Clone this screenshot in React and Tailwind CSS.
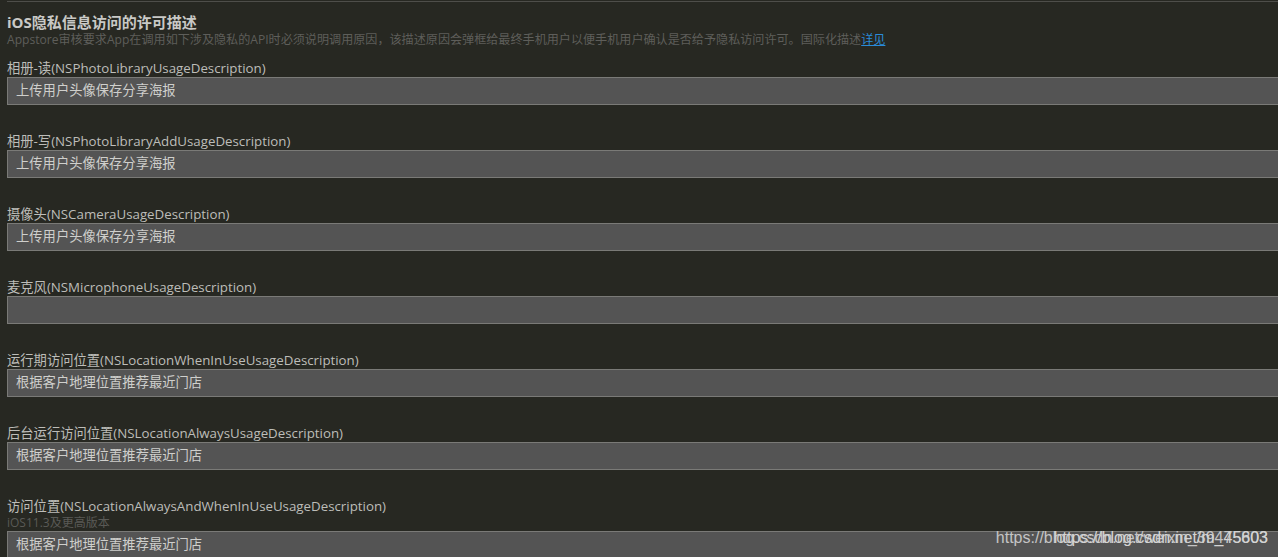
import React from "react";

const fields = [
  { label: "相册-读(NSPhotoLibraryUsageDescription)", value: "上传用户头像保存分享海报" },
  { label: "相册-写(NSPhotoLibraryAddUsageDescription)", value: "上传用户头像保存分享海报" },
  { label: "摄像头(NSCameraUsageDescription)", value: "上传用户头像保存分享海报" },
  { label: "麦克风(NSMicrophoneUsageDescription)", value: "" },
  { label: "运行期访问位置(NSLocationWhenInUseUsageDescription)", value: "根据客户地理位置推荐最近门店" },
  { label: "后台运行访问位置(NSLocationAlwaysUsageDescription)", value: "根据客户地理位置推荐最近门店" },
  { label: "访问位置(NSLocationAlwaysAndWhenInUseUsageDescription)", value: "根据客户地理位置推荐最近门店", hint: "iOS11.3及更高版本" },
];

const font = { fontFamily: '"Open Sans", "Noto Sans CJK SC", sans-serif' };

export default function App() {
  return (
    <div className="relative w-[1278px] h-[557px] overflow-hidden bg-[#272822]" style={font}>
      <div className="pl-[7px]">
        <div className="mt-[1px] border-t border-[#4e4e4a]" />
        <div className="mt-[10px] text-[15px] leading-[20px] font-bold text-[#c9c9c6]">iOS隐私信息访问的许可描述</div>
        <div className="text-[12.1px] leading-[16px] text-[#5e5e5a] whitespace-nowrap">
          Appstore审核要求App在调用如下涉及隐私的API时必须说明调用原因，该描述原因会弹框给最终手机用户以便手机用户确认是否给予隐私访问许可。国际化描述
          <span className="text-[#2a8bd9] underline">详见</span>
        </div>
        <div className="mt-[11px] flex flex-col gap-[27px]">
          {fields.map((f, i) => (
            <div key={i} className="flex flex-col">
              <div className="text-[13.3px] leading-[18px] text-[#bdbdb9] whitespace-nowrap">{f.label}</div>
              {f.hint && (
                <div className="text-[12px] leading-[16px] text-[#5a5a56] whitespace-nowrap">{f.hint}</div>
              )}
              <div className="h-[28px] border border-r-0 border-[#7a7a77] bg-[#545454] pl-[8px] flex items-center text-[13.3px] text-[#cfcfcc] whitespace-nowrap">
                {f.value}
              </div>
            </div>
          ))}
        </div>
      </div>
      <div
        className="absolute right-[10px] top-[528px] text-[16px] leading-[20px] text-[#c4c4c4] whitespace-nowrap"
        style={{ fontFamily: '"Liberation Sans", Arial, sans-serif' }}
      >
        https://blog.csdn.net/weixin_39475803
      </div>
      <div
        className="absolute right-[10px] top-[528px] text-[16px] leading-[20px] text-[#d4d4d4] whitespace-nowrap"
        style={{ fontFamily: '"Liberation Sans", Arial, sans-serif' }}
      >
        https://blog.csdn.net/m_45603
      </div>
    </div>
  );
}
